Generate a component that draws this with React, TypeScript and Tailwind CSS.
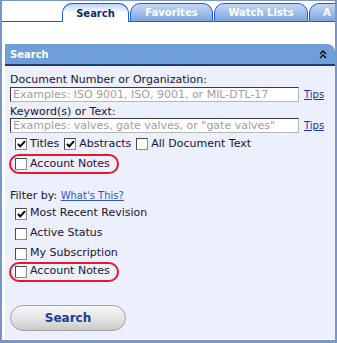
import React from "react";

function Check({ on }: { on?: boolean }) {
  return (
    <span className="inline-flex w-[12px] h-[12px] shrink-0 items-center justify-center bg-white border border-t-[#4a4a4a] border-l-[#4a4a4a] border-r-[#8a8a8a] border-b-[#8a8a8a]">
      {on && (
        <svg width="9" height="8" viewBox="0 0 9 8">
          <path d="M1 4 L3.3 6.4 L8 1.2" fill="none" stroke="#000" strokeWidth="2" />
        </svg>
      )}
    </span>
  );
}

function Row({ label, on }: { label: string; on?: boolean }) {
  return (
    <div className="flex items-center h-[20px] pl-[5px] gap-[3px]">
      <Check on={on} />
      <span>{label}</span>
    </div>
  );
}

function Oval({ children }: { children: React.ReactNode }) {
  return (
    <div className="inline-flex items-center h-[20px] w-[110px] -ml-[1px] pl-[4px] rounded-full border-2 border-[#e4172b]">
      {children}
    </div>
  );
}

export default function App() {
  const tabs = ["Favorites", "Watch Lists"];
  return (
    <div className="w-[337px] h-[343px] bg-white border-x-2 border-t border-b-[3px] border-[#7a96c8] flex flex-col font-['DejaVu_Sans',sans-serif] text-[11px] text-[#221530] overflow-hidden">
      {/* tabs */}
      <div className="flex items-end h-[21px] shrink-0 overflow-hidden">
        <div className="w-[60px] shrink-0 h-full border-b border-[#1c5bd4]" />
        <div className="w-[67px] shrink-0 h-[19px] rounded-t-[10px] border border-b-0 border-[#1c5bd4] bg-linear-to-b from-[#bcd2f3] via-white to-white flex items-center justify-center font-bold text-[10px] text-[#0d2a6b]">
          Search
        </div>
        <div className="w-[1px] shrink-0 h-full border-b border-[#1c5bd4]" />
        {tabs.map((t) => (
          <React.Fragment key={t}>
            <div
              className={`${t === "Favorites" ? "w-[83px]" : "w-[94px]"} shrink-0 h-[19px] rounded-t-[10px] border border-[#1c5bd4] bg-linear-to-b from-[#c4d8f5] to-[#7ea6de] flex items-center justify-center font-bold text-[10px] text-white`}
            >
              {t}
            </div>
            <div className="w-[1px] shrink-0 h-full border-b border-[#1c5bd4]" />
          </React.Fragment>
        ))}
        <div className="w-[40px] shrink-0 h-[19px] rounded-tl-[10px] border border-[#1c5bd4] bg-linear-to-b from-[#c4d8f5] to-[#7ea6de] pl-[13px] flex items-center font-bold text-[10px] text-white">
          A
        </div>
      </div>

      {/* panel */}
      <div className="mt-[22px] ml-[3px] flex-1 flex flex-col mb-[1px]">
        <div className="h-[22px] shrink-0 bg-[#6f9fd8] rounded-tr-[8px] border-b-2 border-[#1f3c78] flex items-center justify-between pl-[5px] pr-[8px]">
          <span className="text-white font-bold text-[10px]">Search</span>
          <svg width="8" height="9" viewBox="0 0 8 9">
            <path d="M1 4 L4 1 L7 4 M1 8 L4 5 L7 8" fill="none" stroke="#000" strokeWidth="1.4" />
          </svg>
        </div>
        <div className="flex-1 bg-[#eceffc] pl-[5px] pt-[7px]">
          <div className="leading-[13px]">Document Number or Organization:</div>
          <div className="flex items-center mt-[1px] h-[15px]">
            <div className="w-[289px] h-[15px] bg-white border border-t-[#3c3c3c] border-l-[#3c3c3c] border-r-[#b8b8b8] border-b-[#b8b8b8] pl-[2px] leading-[13px] text-[#a0a0a0] whitespace-nowrap overflow-hidden">
              Examples: ISO 9001, ISO, 9001, or MIL-DTL-17
            </div>
            <span className="ml-[5px] text-[10px] text-[#2233bb] underline">Tips</span>
          </div>
          <div className="leading-[13px] mt-[3px]">Keyword(s) or Text:</div>
          <div className="flex items-center h-[15px]">
            <div className="w-[289px] h-[15px] bg-white border border-t-[#3c3c3c] border-l-[#3c3c3c] border-r-[#b8b8b8] border-b-[#b8b8b8] pl-[2px] leading-[13px] text-[#a0a0a0] whitespace-nowrap overflow-hidden">
              Examples: valves, gate valves, or "gate valves"
            </div>
            <span className="ml-[5px] text-[10px] text-[#2233bb] underline">Tips</span>
          </div>
          <div className="flex items-center h-[20px] mt-[1px] pl-[5px]">
            <Check on />
            <span className="ml-[3px]">Titles</span>
            <span className="ml-[5px]" />
            <Check on />
            <span className="ml-[3px]">Abstracts</span>
            <span className="ml-[5px]" />
            <Check />
            <span className="ml-[3px]">All Document Text</span>
          </div>
          <Oval>
            <Check />
            <span className="ml-[3px]">Account Notes</span>
          </Oval>
          <div className="mt-[13px] leading-[14px]">
            Filter by: <span className="text-[10px] text-[#3355cc] underline">What's This?</span>
          </div>
          <div className="mt-[1px]">
            <Row label="Most Recent Revision" on />
            <Row label="Active Status" />
            <Row label="My Subscription" />
          </div>
          <div className="-mt-[2px]">
            <Oval>
              <Check />
              <span className="ml-[3px]">Account Notes</span>
            </Oval>
          </div>
          <div className="mt-[22px] w-[116px] h-[26px] rounded-[13px] border border-[#a3a3a3] bg-linear-to-b from-[#f7f7f7] via-[#e6e6e6] to-[#c9c9c9] flex items-center justify-center font-bold text-[12px] text-[#1a3a9a]">
            Search
          </div>
        </div>
      </div>
    </div>
  );
}
